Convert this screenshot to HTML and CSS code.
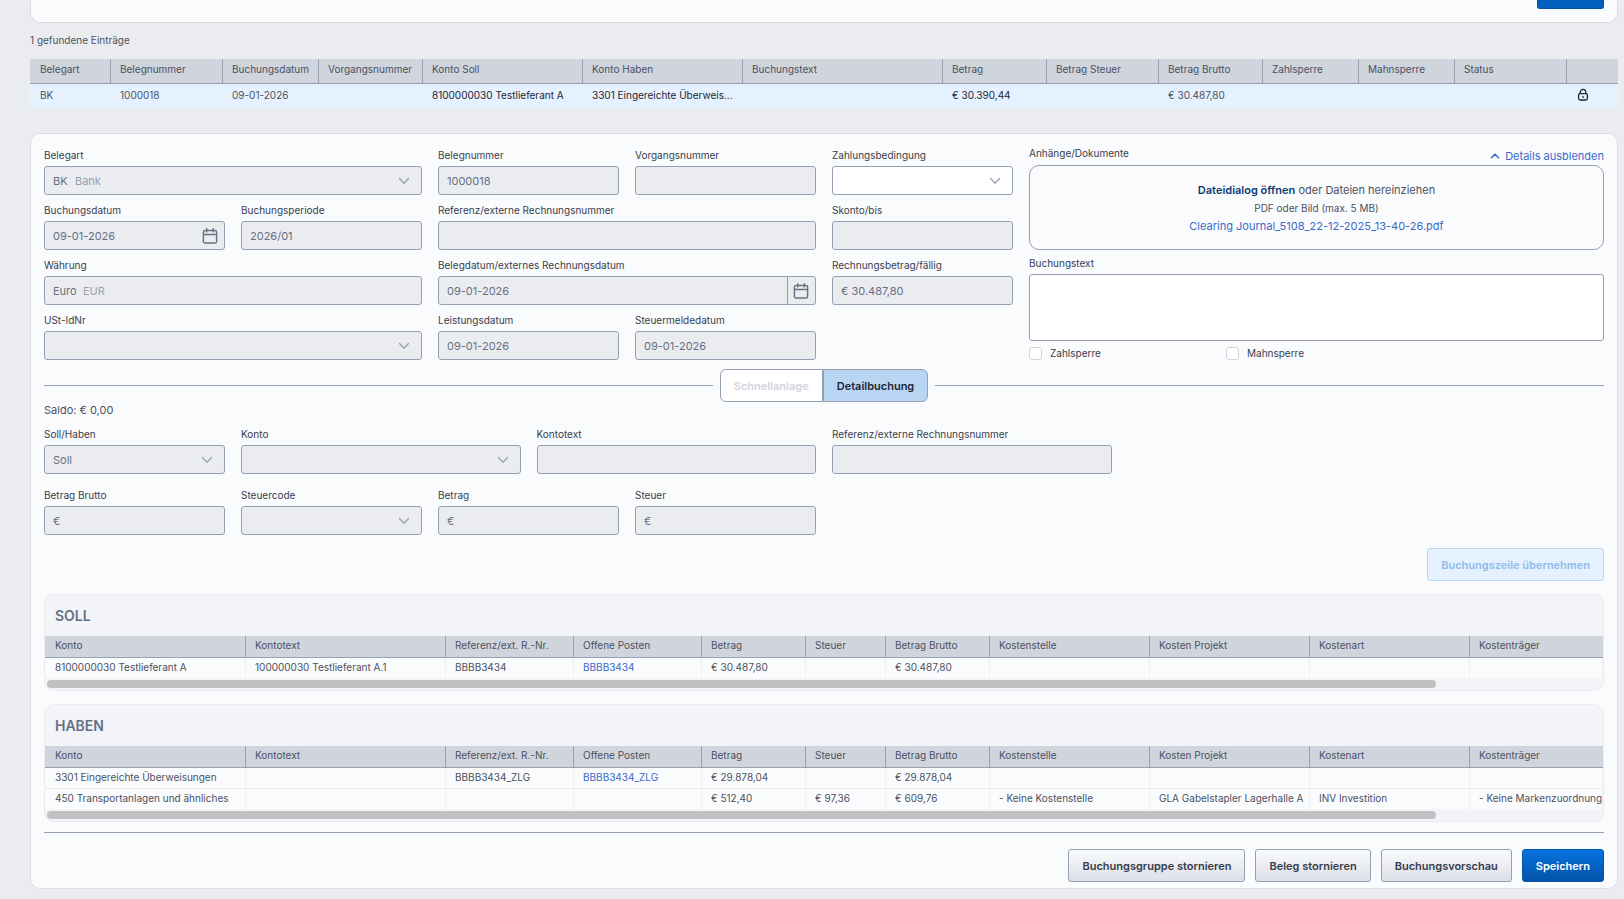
FILE: index.html
```html
<!DOCTYPE html>
<html lang="de">

<head>
  <meta charset="UTF-8">
  <meta name="viewport" content="width=device-width, initial-scale=1.0">
  <title>Buchungen</title>
  <link rel="stylesheet" href="styles.css">
</head>

<body>
  <svg class="icon-defs" aria-hidden="true">
    <symbol id="icon-chevron" viewBox="0 0 16 16">
      <path d="M3.5 5.5 8 10.2l4.5-4.700" fill="none" stroke="currentColor" stroke-width="1.3" stroke-linecap="round" stroke-linejoin="round" />
    </symbol>
    <symbol id="icon-chevron-up" viewBox="0 0 12 12">
      <path d="M2.500 7.800 6 4.200l3.500 3.600" fill="none" stroke="currentColor" stroke-width="1.5" stroke-linecap="round" stroke-linejoin="round" />
    </symbol>
    <symbol id="icon-calendar" viewBox="0 0 16 16">
      <path d="M3 2.500h10a1.600 1.600 0 0 1 1.600 1.600v9.300A1.600 1.600 0 0 1 13 15H3a1.600 1.600 0 0 1-1.600-1.600V4.100A1.600 1.600 0 0 1 3 2.500zM1.400 6.500h13.200M4.800.700v3.200M11.200.700v3.200" fill="none" stroke="currentColor" stroke-width="1.4" stroke-linecap="round" />
    </symbol>
    <symbol id="icon-lock" viewBox="0 0 14 14">
      <rect x="2.600" y="5.600" width="8.800" height="6.400" rx="1.500" fill="none" stroke="currentColor" stroke-width="1.300" />
      <path d="M4.300 5.400V4a2.700 2.700 0 0 1 5.400 0v1.400M7 8.300v1.100" fill="none" stroke="currentColor" stroke-width="1.300" stroke-linecap="round" />
    </symbol>
  </svg>

  <section class="card search-card">
    <button type="button" class="search-btn" aria-label="Suchen"></button>
  </section>

  <p class="result-count">1 gefundene Einträge</p>

  <div class="table-scroll">
    <table class="result-table">
      <colgroup>
        <col class="w-81"><col class="w-112"><col class="w-96"><col class="w-104"><col class="w-160"><col class="w-160"><col class="w-200">
        <col class="w-104"><col class="w-112"><col class="w-104"><col class="w-96"><col class="w-96"><col class="w-112"><col>
      </colgroup>
      <thead>
        <tr>
          <th>Belegart</th>
          <th>Belegnummer</th>
          <th>Buchungsdatum</th>
          <th>Vorgangsnummer</th>
          <th>Konto Soll</th>
          <th>Konto Haben</th>
          <th>Buchungstext</th>
          <th>Betrag</th>
          <th>Betrag Steuer</th>
          <th>Betrag Brutto</th>
          <th>Zahlsperre</th>
          <th>Mahnsperre</th>
          <th>Status</th>
          <th></th>
        </tr>
      </thead>
      <tbody>
        <tr>
          <td>BK</td>
          <td>1000018</td>
          <td>09-01-2026</td>
          <td></td>
          <td class="strong">8100000030 Testlieferant A</td>
          <td class="strong">3301 Eingereichte Überweis...</td>
          <td></td>
          <td class="strong">€ 30.390,44</td>
          <td></td>
          <td>€ 30.487,80</td>
          <td></td>
          <td></td>
          <td></td>
          <td class="strong"><svg class="icon-lock"><use href="#icon-lock" /></svg></td>
        </tr>
      </tbody>
    </table>
  </div>

  <main class="card booking-card">
    <form>
      <div class="form-grid header-grid">
        <div class="field span-4">
          <label for="belegart">Belegart</label>
          <div class="control">
            <select id="belegart" disabled><option>BK</option></select>
            <span class="hint hint-bank">Bank</span>
            <svg class="chevron"><use href="#icon-chevron" /></svg>
          </div>
        </div>
        <div class="field span-2">
          <label for="belegnummer">Belegnummer</label>
          <input id="belegnummer" type="text" value="1000018" disabled>
        </div>
        <div class="field span-2">
          <label for="vorgangsnummer">Vorgangsnummer</label>
          <input id="vorgangsnummer" type="text" disabled>
        </div>
        <div class="field span-2">
          <label for="zahlungsbedingung">Zahlungsbedingung</label>
          <div class="control">
            <select id="zahlungsbedingung"><option></option></select>
            <svg class="chevron"><use href="#icon-chevron" /></svg>
          </div>
        </div>

        <div class="documents">
          <div class="documents-head">
            <span class="documents-label">Anhänge/Dokumente</span>
            <a href="#" class="toggle-details">
              <svg class="chevron-up"><use href="#icon-chevron-up" /></svg>Details ausblenden
            </a>
          </div>
          <div class="dropzone">
            <p><button type="button" class="open-dialog">Dateidialog öffnen</button> oder Dateien hereinziehen</p>
            <p class="dropzone-info">PDF oder Bild (max. 5 MB)</p>
            <p><a href="#">Clearing Journal_5108_22-12-2025_13-40-26.pdf</a></p>
          </div>
          <label class="text-label" for="buchungstext">Buchungstext</label>
          <textarea id="buchungstext"></textarea>
          <div class="checks">
            <label class="check"><input type="checkbox">Zahlsperre</label>
            <label class="check"><input type="checkbox">Mahnsperre</label>
          </div>
        </div>

        <div class="field span-2">
          <label for="buchungsdatum">Buchungsdatum</label>
          <div class="control">
            <input id="buchungsdatum" type="text" value="09-01-2026" disabled>
            <button type="button" class="calendar-btn" aria-label="Kalender" disabled><svg><use href="#icon-calendar" /></svg></button>
          </div>
        </div>
        <div class="field span-2">
          <label for="buchungsperiode">Buchungsperiode</label>
          <input id="buchungsperiode" type="text" value="2026/01" disabled>
        </div>
        <div class="field span-4">
          <label for="referenz">Referenz/externe Rechnungsnummer</label>
          <input id="referenz" type="text" disabled>
        </div>
        <div class="field span-2">
          <label for="skonto">Skonto/bis</label>
          <input id="skonto" type="text" disabled>
        </div>

        <div class="field span-4">
          <label for="waehrung">Währung</label>
          <div class="control">
            <input id="waehrung" type="text" value="Euro" disabled>
            <span class="hint hint-eur">EUR</span>
          </div>
        </div>
        <div class="field span-4">
          <label for="belegdatum">Belegdatum/externes Rechnungsdatum</label>
          <div class="control">
            <input id="belegdatum" type="text" value="09-01-2026" disabled>
            <button type="button" class="calendar-btn divided" aria-label="Kalender" disabled><svg><use href="#icon-calendar" /></svg></button>
          </div>
        </div>
        <div class="field span-2">
          <label for="rechnungsbetrag">Rechnungsbetrag/fällig</label>
          <input id="rechnungsbetrag" type="text" value="€ 30.487,80" disabled>
        </div>

        <div class="field span-4">
          <label for="ustid">USt-IdNr</label>
          <div class="control">
            <select id="ustid" disabled><option></option></select>
            <svg class="chevron"><use href="#icon-chevron" /></svg>
          </div>
        </div>
        <div class="field span-2">
          <label for="leistungsdatum">Leistungsdatum</label>
          <input id="leistungsdatum" type="text" value="09-01-2026" disabled>
        </div>
        <div class="field span-2">
          <label for="steuermeldedatum">Steuermeldedatum</label>
          <input id="steuermeldedatum" type="text" value="09-01-2026" disabled>
        </div>
      </div>

      <div class="mode-switch">
        <div class="mode-buttons">
          <button type="button" class="mode-btn" disabled>Schnellanlage</button>
          <button type="button" class="mode-btn active">Detailbuchung</button>
        </div>
      </div>

      <p class="saldo">Saldo: € 0,00</p>

      <div class="form-grid line-grid">
        <div class="field span-2">
          <label for="sollhaben">Soll/Haben</label>
          <div class="control">
            <select id="sollhaben" disabled><option>Soll</option></select>
            <svg class="chevron"><use href="#icon-chevron" /></svg>
          </div>
        </div>
        <div class="field span-3">
          <label for="konto">Konto</label>
          <div class="control">
            <select id="konto" disabled><option></option></select>
            <svg class="chevron"><use href="#icon-chevron" /></svg>
          </div>
        </div>
        <div class="field span-3">
          <label for="kontotext">Kontotext</label>
          <input id="kontotext" type="text" disabled>
        </div>
        <div class="field span-3">
          <label for="referenz2">Referenz/externe Rechnungsnummer</label>
          <input id="referenz2" type="text" disabled>
        </div>
        <div class="field span-2 row-start">
          <label for="brutto">Betrag Brutto</label>
          <input id="brutto" type="text" value="€" disabled>
        </div>
        <div class="field span-2">
          <label for="steuercode">Steuercode</label>
          <div class="control">
            <select id="steuercode" disabled><option></option></select>
            <svg class="chevron"><use href="#icon-chevron" /></svg>
          </div>
        </div>
        <div class="field span-2">
          <label for="betrag">Betrag</label>
          <input id="betrag" type="text" value="€" disabled>
        </div>
        <div class="field span-2">
          <label for="steuer">Steuer</label>
          <input id="steuer" type="text" value="€" disabled>
        </div>
      </div>

      <div class="line-actions">
        <button type="button" class="btn btn-light" disabled>Buchungszeile übernehmen</button>
      </div>

      <section class="ledger">
        <h2>SOLL</h2>
        <div class="table-scroll">
          <table class="ledger-table">
            <colgroup>
              <col class="w-201"><col class="w-200"><col class="w-128"><col class="w-128"><col class="w-104"><col class="w-80">
              <col class="w-104"><col class="w-160"><col class="w-160"><col class="w-160"><col>
            </colgroup>
            <thead>
              <tr>
                <th>Konto</th>
                <th>Kontotext</th>
                <th>Referenz/ext. R.-Nr.</th>
                <th>Offene Posten</th>
                <th>Betrag</th>
                <th>Steuer</th>
                <th>Betrag Brutto</th>
                <th>Kostenstelle</th>
                <th>Kosten Projekt</th>
                <th>Kostenart</th>
                <th>Kostenträger</th>
              </tr>
            </thead>
            <tbody>
              <tr>
                <td>8100000030 Testlieferant A</td>
                <td>100000030 Testlieferant A.1</td>
                <td>BBBB3434</td>
                <td><a href="#">BBBB3434</a></td>
                <td>€ 30.487,80</td>
                <td></td>
                <td>€ 30.487,80</td>
                <td></td>
                <td></td>
                <td></td>
                <td></td>
              </tr>
            </tbody>
          </table>
        </div>
        <div class="scrollbar"><div class="scrollbar-thumb"></div></div>
      </section>

      <section class="ledger">
        <h2>HABEN</h2>
        <div class="table-scroll">
          <table class="ledger-table">
            <colgroup>
              <col class="w-201"><col class="w-200"><col class="w-128"><col class="w-128"><col class="w-104"><col class="w-80">
              <col class="w-104"><col class="w-160"><col class="w-160"><col class="w-160"><col>
            </colgroup>
            <thead>
              <tr>
                <th>Konto</th>
                <th>Kontotext</th>
                <th>Referenz/ext. R.-Nr.</th>
                <th>Offene Posten</th>
                <th>Betrag</th>
                <th>Steuer</th>
                <th>Betrag Brutto</th>
                <th>Kostenstelle</th>
                <th>Kosten Projekt</th>
                <th>Kostenart</th>
                <th>Kostenträger</th>
              </tr>
            </thead>
            <tbody>
              <tr>
                <td>3301 Eingereichte Überweisungen</td>
                <td></td>
                <td>BBBB3434_ZLG</td>
                <td><a href="#">BBBB3434_ZLG</a></td>
                <td>€ 29.878,04</td>
                <td></td>
                <td>€ 29.878,04</td>
                <td></td>
                <td></td>
                <td></td>
                <td></td>
              </tr>
              <tr>
                <td>450 Transportanlagen und ähnliches</td>
                <td></td>
                <td></td>
                <td></td>
                <td>€ 512,40</td>
                <td>€ 97,36</td>
                <td>€ 609,76</td>
                <td>- Keine Kostenstelle</td>
                <td>GLA Gabelstapler Lagerhalle A</td>
                <td>INV Investition</td>
                <td>- Keine Markenzuordnung</td>
              </tr>
            </tbody>
          </table>
        </div>
        <div class="scrollbar"><div class="scrollbar-thumb"></div></div>
      </section>

      <footer class="form-actions">
        <button type="button" class="btn">Buchungsgruppe stornieren</button>
        <button type="button" class="btn">Beleg stornieren</button>
        <button type="button" class="btn">Buchungsvorschau</button>
        <button type="submit" class="btn btn-primary">Speichern</button>
      </footer>
    </form>
  </main>
</body>

</html>
```
FILE: styles.css
```css
* {
  box-sizing: border-box;
}

body {
  margin: 0;
  padding: 0 6px 10px 30px;
  background-color: #ebecf0;
  color: #4b5160;
  font-family: Inter, "Liberation Sans", sans-serif;
  font-size: 10px;
  line-height: 16px;
}

p,
h2 {
  margin: 0;
}

a {
  color: #3a6ac8;
  text-decoration: none;
}

button,
input,
select,
textarea {
  font-family: inherit;
  font-size: 11px;
}

.icon-defs {
  display: none;
}

.card {
  background-color: #fafbfd;
  border: 1px solid #dadce0;
  border-radius: 10px;
}

/* Search card */
.search-card {
  display: flex;
  justify-content: flex-end;
  padding: 0 13px 13px;
  border-top: none;
  border-radius: 0 0 10px 10px;
}

.search-btn {
  width: 67px;
  height: 9px;
  padding: 0;
  border: 1px solid #0353a8;
  border-top: none;
  border-radius: 0 0 3px 3px;
  background: #0460be;
}

.result-count {
  margin: 9px 0 11px;
}

/* Tables */
.table-scroll {
  overflow-x: auto;
}

table {
  width: 100%;
  min-width: 1500px;
  table-layout: fixed;
  border-collapse: separate;
  border-spacing: 0;
}

th {
  padding: 2px 0 6px 9px;
  background-color: #d0d4dd;
  border-right: 1px solid #98a1b3;
  border-bottom: 1px solid #98a1b3;
  font-weight: 400;
  text-align: left;
  white-space: nowrap;
}

td {
  height: 24px;
  padding: 0 0 2px 9px;
  white-space: nowrap;
}

th:first-child,
td:first-child {
  padding-left: 10px;
}

th:last-child,
td:last-child {
  border-right: none;
}

.result-table td {
  background-color: #e5f1fe;
}

.result-table .strong {
  color: #1f2533;
}

.icon-lock {
  display: block;
  width: 14px;
  height: 14px;
}

.w-80 { width: 80px; }
.w-81 { width: 81px; }
.w-96 { width: 96px; }
.w-104 { width: 104px; }
.w-112 { width: 112px; }
.w-128 { width: 128px; }
.w-160 { width: 160px; }
.w-200 { width: 200px; }
.w-201 { width: 201px; }

/* Booking form */
.booking-card {
  margin-top: 25px;
  padding: 13px 13px 6px;
}

.form-grid {
  display: grid;
  grid-template-columns: repeat(16, minmax(0, 1fr));
  column-gap: 16px;
}

.header-grid {
  row-gap: 7px;
}

.line-grid {
  row-gap: 13px;
  margin-top: 8px;
}

.field {
  display: flex;
  flex-direction: column;
  gap: 3px;
}

.span-2 { grid-column-end: span 2; }
.span-3 { grid-column-end: span 3; }
.span-4 { grid-column-end: span 4; }
.row-start { grid-column-start: 1; }

label,
.documents-label {
  color: #373d4d;
}

input[type="text"],
select,
textarea {
  width: 100%;
  height: 29px;
  margin: 0;
  padding: 0 8px;
  background-color: #fff;
  border: 1px solid #959fb2;
  border-radius: 3px;
  color: #667085;
  appearance: none;
}

input[type="text"]:disabled,
select:disabled {
  background-color: #ebecf0;
  opacity: 1;
}

.control {
  display: grid;
  align-items: center;
}

.control > * {
  grid-area: 1 / 1;
}

.chevron {
  justify-self: end;
  width: 16px;
  height: 16px;
  margin-right: 10px;
  color: #959fb2;
  pointer-events: none;
}

.hint {
  color: #9aa1b4;
  font-size: 11px;
  pointer-events: none;
}

.hint-bank {
  margin-left: 31px;
}

.hint-eur {
  margin-left: 39px;
}

.calendar-btn {
  display: flex;
  align-items: center;
  justify-content: center;
  justify-self: end;
  width: 29px;
  height: 29px;
  padding: 0 2px 0 0;
  background: none;
  border: none;
  color: #667085;
}

.calendar-btn.divided {
  border-left: 1px solid #959fb2;
}

.calendar-btn svg {
  width: 16px;
  height: 16px;
}

/* Documents */
.documents {
  grid-column: 11 / -1;
  grid-row: 1 / span 4;
  display: flex;
  flex-direction: column;
}

.documents-head {
  display: flex;
  justify-content: space-between;
  height: 18px;
}

.documents-label,
.text-label {
  line-height: 13px;
}

.toggle-details {
  display: flex;
  align-items: center;
  gap: 4px;
  font-size: 11px;
}

.chevron-up {
  width: 12px;
  height: 12px;
}

.dropzone {
  display: flex;
  flex-direction: column;
  align-items: center;
  justify-content: center;
  gap: 2px;
  height: 85px;
  border: 1px solid #959fb2;
  border-radius: 10px;
  font-size: 11px;
}

.dropzone-info {
  font-size: 10px;
}

.open-dialog {
  padding: 0;
  background: none;
  border: none;
  color: #0c3a75;
  font-weight: 600;
}

.text-label {
  margin: 7px 0 4px;
}

textarea {
  height: 67px;
  resize: none;
}

.checks {
  display: grid;
  grid-template-columns: repeat(6, minmax(0, 1fr));
  column-gap: 16px;
  margin-top: 6px;
}

.check {
  grid-column-end: span 2;
  display: flex;
  align-items: center;
  gap: 8px;
  line-height: 13px;
}

.check input {
  width: 13px;
  height: 13px;
  margin: 0;
  background-color: #fff;
  border: 1px solid #d0d4dd;
  border-radius: 3px;
  appearance: none;
}

/* Mode switch */
.mode-switch {
  display: flex;
  align-items: center;
  gap: 7px;
  margin-top: 9px;
}

.mode-switch::before,
.mode-switch::after {
  content: "";
  flex: 1;
  border-top: 1px solid #959fb2;
}

.mode-buttons {
  display: flex;
}

.mode-btn {
  height: 33px;
  padding: 0 13px;
  background-color: #fff;
  border: 1px solid #959fb2;
  border-radius: 6px 0 0 6px;
  color: #d0d4dd;
  font-weight: 600;
}

.mode-btn.active {
  background-color: #b8d6f3;
  border-radius: 0 6px 6px 0;
  color: #1f2533;
}

.saldo {
  font-size: 11px;
}

.line-actions {
  display: flex;
  justify-content: flex-end;
  margin-top: 13px;
}

/* Buttons */
.btn {
  height: 33px;
  padding: 0 13px;
  background: linear-gradient(#fafbfd, #dcdfe7);
  border: 1px solid #959fb2;
  border-radius: 3px;
  color: #373d4d;
  font-weight: 600;
  cursor: pointer;
}

.btn-light {
  background: #e5f1fe;
  border-color: #b8d6f3;
  color: #90bce9;
}

.btn-primary {
  background: linear-gradient(#0672de, #0353a8);
  border-color: #0353a8;
  color: #fff;
}

/* Soll / Haben */
.ledger {
  margin-top: 13px;
  background-color: #f3f4f8;
  border: 1px solid #ebecf0;
  border-radius: 10px;
}

.ledger h2 {
  padding: 0 10px;
  color: #667085;
  font-size: 14px;
  font-weight: 600;
  line-height: 41px;
}

.ledger-table th {
  padding-top: 1px;
  padding-bottom: 4px;
}

.ledger-table td {
  height: 20px;
  background-color: #fafbfd;
  border-right: 1px solid #f0f1f5;
}

.ledger-table tr + tr td {
  height: 21px;
  border-top: 1px solid #ebecf0;
}

.scrollbar {
  padding: 2px;
}

.scrollbar-thumb {
  width: 89.4%;
  height: 8px;
  background-color: #bfc0c2;
  border-radius: 4px;
}

.form-actions {
  display: flex;
  justify-content: flex-end;
  gap: 10px;
  margin-top: 10px;
  padding-top: 16px;
  border-top: 1px solid #959fb2;
}
```
